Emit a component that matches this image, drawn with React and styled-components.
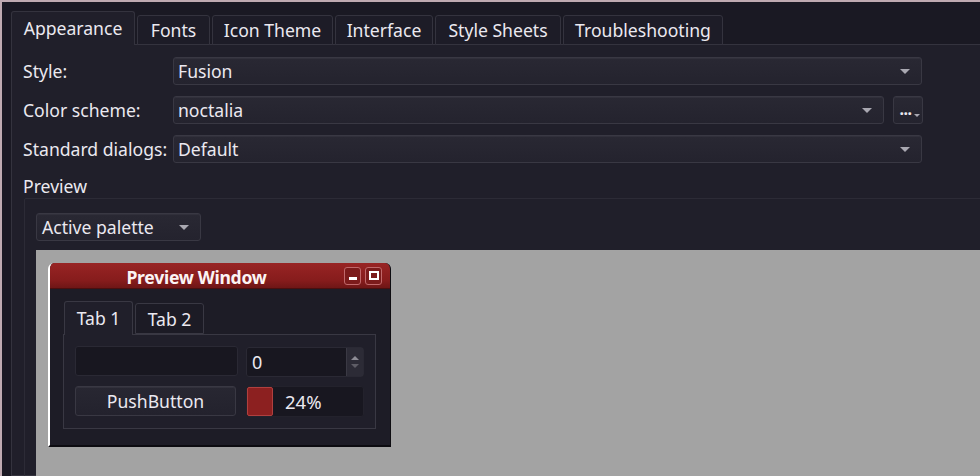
import React from "react";
import styled, { createGlobalStyle } from "styled-components";

const Global = createGlobalStyle`
  html, body { margin: 0; padding: 0; background: #1a1923; }
  body { font-family: "Noto Sans", "DejaVu Sans", sans-serif; }
  * { box-sizing: border-box; }
`;

const FS = "17.6px";

const Root = styled.div`
  width: 980px;
  height: 476px;
  overflow: hidden;
  background: #1a1923;
  border-top: 2px solid #bfaab1;
  border-left: 2px solid #bfaab1;
  padding: 9px 0 0 9px;
  color: #ebe9f0;
  font-size: ${FS};
  display: flex;
  flex-direction: column;
`;

const TabBar = styled.div`
  display: flex;
  align-items: flex-end;
  gap: 2px;
  position: relative;
  z-index: 1;
  height: 34px;
`;

const Tab = styled.div`
  height: ${(p) => (p.$active ? "34px" : "30px")};
  width: ${(p) => p.$w}px;
  display: flex;
  align-items: center;
  justify-content: center;
  background: ${(p) => (p.$active ? "#201f2a" : "#1d1c27")};
  border: 1px solid #34333e;
  border-bottom: ${(p) => (p.$active ? "none" : "1px solid #34333e")};
  border-radius: 3px 3px 0 0;
  font-size: ${FS};
  padding-bottom: 1px;
  white-space: nowrap;
`;

const Panel = styled.div`
  margin-top: -1px;
  margin-right: -20px;
  flex: 1;
  background: #201f2a;
  border: 1px solid #34333e;
  padding: 12px 0 0 11px;
  display: flex;
  flex-direction: column;
`;

const Form = styled.div`
  display: grid;
  grid-template-columns: 150px 749px;
  row-gap: 11px;
  align-items: center;
`;

const Label = styled.div`
  font-size: ${FS};
  white-space: nowrap;
`;

const FieldRow = styled.div`
  display: flex;
  gap: 9px;
`;

const Combo = styled.div`
  height: 28px;
  width: ${(p) => p.$w}px;
  flex: none;
  border: 1px solid #393843;
  border-radius: 3px;
  background: linear-gradient(#292833, #24232e);
  box-shadow: inset 0 1px 0 #31303b;
  display: flex;
  align-items: center;
  padding: 0 11px 0 ${(p) => p.$pl || 4}px;
  font-size: ${FS};
  justify-content: space-between;
  white-space: nowrap;
`;

const Arrow = styled.span`
  width: 0;
  height: 0;
  border-left: 5px solid transparent;
  border-right: 5px solid transparent;
  border-top: 5px solid #a9a8b1;
`;

const DotsButton = styled.div`
  position: relative;
  width: 30px;
  flex: none;
  height: 28px;
  border: 1px solid #393843;
  border-radius: 3px;
  background: linear-gradient(#292833, #24232e);
  box-shadow: inset 0 1px 0 #31303b;
  font-size: 16px;
  font-weight: bold;
  display: flex;
  align-items: center;
  justify-content: center;
  padding-right: 5px;
  padding-bottom: 2px;
  letter-spacing: -0.5px;
`;

const SmallArrow = styled.span`
  position: absolute;
  right: 2px;
  bottom: 6px;
  border-left: 3px solid transparent;
  border-right: 3px solid transparent;
  border-top: 3px solid #a9a8b1;
`;

const SectionLabel = styled.div`
  margin-top: 11px;
  height: 24px;
  display: flex;
  align-items: center;
  font-size: ${FS};
`;

const Group = styled.div`
  margin-left: 1px;
  flex: 1;
  border: 1px solid #2c2b36;
  border-radius: 2px;
  padding: 14px 0 0 11px;
  display: flex;
  flex-direction: column;
  margin-right: -20px;
  margin-bottom: -20px;
`;

const PreviewArea = styled.div`
  margin-top: 9px;
  flex: 1;
  background: #a3a3a3;
  padding: 13px 0 0 12px;
`;

const Window = styled.div`
  width: 343px;
  height: 184px;
  display: flex;
  flex-direction: column;
  border-radius: 6px 6px 0 0;
  overflow: hidden;
  background: #1d1c26;
  border-left: 2px solid #ffffff;
  border-bottom: 2px solid #0c0b10;
  border-right: 1px solid #0e0d12;
`;

const TitleBar = styled.div`
  height: 26px;
  background: linear-gradient(#982424, #861c1c 70%, #6e1616);
  border-bottom: 1px solid #4a0f0f;
  display: flex;
  align-items: center;
  padding: 0 8px 0 0;
  gap: 4px;
`;

const Title = styled.div`
  flex: 1;
  text-align: center;
  font-weight: bold;
  font-size: ${FS};
  letter-spacing: -0.3px;
  color: #fbf4f4;
  padding-top: 2px;
  padding-left: 3px;
`;

const TitleButton = styled.div`
  width: 17px;
  height: 18px;
  border: 1px solid #c0686a;
  border-radius: 3px;
  background: #7c1b1b;
  display: flex;
  align-items: center;
  justify-content: center;
`;

const MinGlyph = styled.span`
  width: 8px;
  height: 3px;
  background: #ffffff;
  margin-top: 5px;
`;

const MaxGlyph = styled.span`
  width: 10px;
  height: 9px;
  border: 2px solid #ffffff;
`;

const WinBody = styled.div`
  flex: 1;
  padding: 12px 0 0 13px;
  display: flex;
  flex-direction: column;
`;

const InnerTabs = styled.div`
  display: flex;
  align-items: flex-end;
  gap: 2px;
  height: 33px;
  padding-left: 1px;
  position: relative;
  z-index: 1;
`;

const InnerTab = styled.div`
  width: 69px;
  height: ${(p) => (p.$active ? "34px" : "31px")};
  display: flex;
  align-items: center;
  justify-content: center;
  background: ${(p) => (p.$active ? "#201f2a" : "#1c1b25")};
  border: 1px solid #393843;
  border-bottom: ${(p) => (p.$active ? "none" : "1px solid #393843")};
  border-radius: 3px 3px 0 0;
  font-size: ${FS};
  padding-bottom: ${(p) => (p.$active ? "2px" : "0")};
  margin-bottom: ${(p) => (p.$active ? "-1px" : "0")};
`;

const InnerPane = styled.div`
  width: 313px;
  height: 95px;
  background: #201f2a;
  border: 1px solid #393843;
  padding: 11px 0 0 11px;
  display: grid;
  grid-template-columns: 163px 118px;
  column-gap: 8px;
  row-gap: 9px;
  align-content: start;
`;

const LineEdit = styled.div`
  height: 30px;
  border: 1px solid #2a2934;
  border-radius: 3px;
  background: #181720;
`;

const Spin = styled.div`
  height: 30px;
  margin-top: 1px;
  border: 1px solid #2a2934;
  border-radius: 3px;
  background: #181720;
  display: flex;
  align-items: center;
  justify-content: space-between;
  padding-left: 5px;
  font-size: 18px;
`;

const SpinArrows = styled.div`
  width: 17px;
  height: 100%;
  background: #2c2b36;
  border-left: 1px solid #3a3944;
  display: flex;
  flex-direction: column;
  align-items: center;
  justify-content: center;
  gap: 4px;
`;

const Up = styled.span`
  border-left: 4px solid transparent;
  border-right: 4px solid transparent;
  border-bottom: 4px solid #8d8c95;
`;
const Down = styled.span`
  border-left: 4px solid transparent;
  border-right: 4px solid transparent;
  border-top: 4px solid #5e5d66;
`;

const PushButton = styled.div`
  height: 30px;
  width: 161px;
  border: 1px solid #393843;
  border-radius: 3px;
  background: linear-gradient(#282732, #23222d);
  box-shadow: inset 0 1px 0 #32313c;
  display: flex;
  align-items: center;
  justify-content: center;
  font-size: ${FS};
`;

const Progress = styled.div`
  height: 31px;
  border: 1px solid #23222c;
  border-radius: 3px;
  background: #181720;
  display: flex;
  align-items: center;
  position: relative;
  font-size: 18.5px;
`;

const Chunk = styled.div`
  position: absolute;
  left: 0;
  top: 0;
  bottom: 0;
  width: 26px;
  background: #8c2020;
  border: 1px solid #b0403f;
  border-radius: 2px;
`;

const ProgressText = styled.span`
  margin-left: 38px;
`;

const tabs = [
  { t: "Appearance", w: 124, active: true },
  { t: "Fonts", w: 73 },
  { t: "Icon Theme", w: 121 },
  { t: "Interface", w: 98 },
  { t: "Style Sheets", w: 126 },
  { t: "Troubleshooting", w: 160 },
];

export default function App() {
  return (
    <>
      <Global />
      <Root>
        <TabBar>
          {tabs.map((tab) => (
            <Tab key={tab.t} $active={tab.active} $w={tab.w}>
              {tab.t}
            </Tab>
          ))}
        </TabBar>
        <Panel>
          <Form>
            <Label>Style:</Label>
            <Combo $w={749}>
              <span>Fusion</span>
              <Arrow />
            </Combo>
            <Label>Color scheme:</Label>
            <FieldRow>
              <Combo $w={711}>
                <span>noctalia</span>
                <Arrow />
              </Combo>
              <DotsButton>
                ...
                <SmallArrow />
              </DotsButton>
            </FieldRow>
            <Label>Standard dialogs:</Label>
            <Combo $w={749}>
              <span>Default</span>
              <Arrow />
            </Combo>
          </Form>
          <SectionLabel>Preview</SectionLabel>
          <Group>
            <Combo $w={165} $pl={5}>
              <span>Active palette</span>
              <Arrow />
            </Combo>
            <PreviewArea>
              <Window>
                <TitleBar>
                  <Title>Preview Window</Title>
                  <TitleButton>
                    <MinGlyph />
                  </TitleButton>
                  <TitleButton>
                    <MaxGlyph />
                  </TitleButton>
                </TitleBar>
                <WinBody>
                  <InnerTabs>
                    <InnerTab $active>Tab 1</InnerTab>
                    <InnerTab>Tab 2</InnerTab>
                  </InnerTabs>
                  <InnerPane>
                    <LineEdit />
                    <Spin>
                      <span>0</span>
                      <SpinArrows>
                        <Up />
                        <Down />
                      </SpinArrows>
                    </Spin>
                    <PushButton>PushButton</PushButton>
                    <Progress>
                      <Chunk />
                      <ProgressText>24%</ProgressText>
                    </Progress>
                  </InnerPane>
                </WinBody>
              </Window>
            </PreviewArea>
          </Group>
        </Panel>
      </Root>
    </>
  );
}
